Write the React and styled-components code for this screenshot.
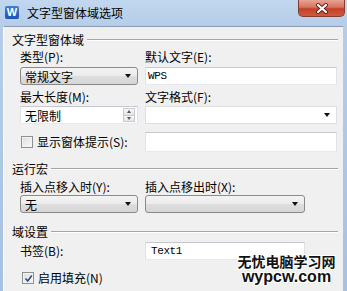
import React from "react";
import styled, { createGlobalStyle } from "styled-components";

const Global = createGlobalStyle`
  html, body { margin: 0; padding: 0; background: #b9d1ea; }
  body { font-family: "Noto Sans CJK SC", "Noto Sans", sans-serif; font-size: 12px; color: #000; }
`;

const Window = styled.div`
  position: relative;
  width: 347px;
  height: 291px;
  overflow: hidden;
  display: flex;
  flex-direction: column;
  background: linear-gradient(180deg, #c2d7ef 0px, #b5cde9 26px, #a7c1e1 291px);
`;

const TitleBar = styled.div`
  height: 26px;
  flex: none;
  display: flex;
  align-items: flex-start;
  padding-left: 5px;
`;

const AppIcon = styled.div`
  margin-top: 6px;
  width: 14px;
  height: 13px;
  background: linear-gradient(180deg, #3c7fd6, #1b55b0);
  border-radius: 2px;
  color: #fff;
  font-family: "Liberation Sans", sans-serif;
  font-weight: bold;
  font-size: 11px;
  line-height: 13px;
  text-align: center;
`;

const Title = styled.div`
  margin-left: 8px;
  margin-top: 5px;
  font-size: 12px;
  line-height: 16px;
  color: #000;
`;

const CloseBtn = styled.div`
  margin-left: auto;
  margin-right: 2px;
  width: 47px;
  height: 17px;
  box-sizing: border-box;
  border: 1px solid #8a3b30;
  border-top: none;
  border-radius: 0 0 5px 5px;
  background: linear-gradient(180deg, #e9a395 0%, #d7735f 45%, #c3402a 55%, #d05a3c 100%);
  display: flex;
  align-items: center;
  justify-content: center;
`;

const Body = styled.div`
  flex: 1;
  margin: 0 4px 0 3px;
  background: #f0f0f0;
  border-top: 1px solid #8b9bb0;
  border-left: 1px solid #f8fbfe;
  padding: 6px 5px 0 8px;
`;

const Header = styled.div`
  display: flex;
  align-items: center;
  height: 14px;
  line-height: 14px;
  margin-top: ${(p) => p.$mt || 0}px;
  white-space: nowrap;
  &::after {
    content: "";
    flex: 1;
    height: 1px;
    background: #a5a5a5;
    border-bottom: 1px solid #fff;
    margin-left: 3px;
  }
`;

const Row = styled.div`
  display: grid;
  grid-template-columns: 118px ${(p) => p.$right || 192}px;
  column-gap: 7px;
  align-items: center;
  height: ${(p) => p.$h || 14}px;
  margin-top: ${(p) => p.$mt || 0}px;
  padding-left: 8px;
`;

const Label = styled.div`
  line-height: 14px;
  white-space: nowrap;
`;

const Input = styled.div`
  box-sizing: border-box;
  height: ${(p) => p.$h || 18}px;
  background: #fff;
  border: 1px solid;
  border-color: #c5c9cf #dfe3e8 #e6eaee #dfe3e8;
  padding-left: ${(p) => p.$pl || 4}px;
  display: flex;
  align-items: center;
  position: relative;
`;

const Mono = styled.span`
  font-family: "Liberation Mono", monospace;
  font-size: 11px;
  letter-spacing: -0.4px;
`;

const Select = styled.div`
  box-sizing: border-box;
  height: 18px;
  border: 1px solid ${(p) => (p.$flat ? "#dcdfe4" : "#8a8a8a")};
  border-radius: ${(p) => (p.$flat ? 0 : 3)}px;
  background: ${(p) =>
    p.$flat ? "#fff" : "linear-gradient(180deg, #f4f4f4 0%, #ebebeb 50%, #dedede 51%, #d6d6d6 100%)"};
  display: flex;
  align-items: center;
  padding: 0 6px 0 4px;
`;

const SelectText = styled.span`
  flex: 1;
`;

const Arrow = styled.span`
  width: 0;
  height: 0;
  border-left: 3.5px solid transparent;
  border-right: 3.5px solid transparent;
  border-top: 4px solid #111;
`;

const Spin = styled.div`
  position: absolute;
  right: 2px;
  top: 1px;
  width: 12px;
  height: 14px;
  display: flex;
  flex-direction: column;
`;

const SpinBtn = styled.div`
  flex: 1;
  box-sizing: border-box;
  border: 1px solid #c8ccd2;
  background: linear-gradient(180deg, #f8f8f8, #e4e4e4);
  display: flex;
  align-items: center;
  justify-content: center;
  margin-top: ${(p) => (p.$down ? -1 : 0)}px;
  &::after {
    content: "";
    border-left: 2.5px solid transparent;
    border-right: 2.5px solid transparent;
    ${(p) => (p.$down ? "border-top: 3px solid #556;" : "border-bottom: 3px solid #556;")}
  }
`;

const Check = styled.label`
  display: flex;
  align-items: center;
  gap: 4px;
  white-space: nowrap;
  line-height: 14px;
`;

const Box = styled.span`
  box-sizing: border-box;
  width: 12px;
  height: 12px;
  border: 1px solid #8e8f8f;
  background: linear-gradient(135deg, #dcdcdc, #fbfbfb);
  box-shadow: inset 0 0 0 1px #f4f4f4;
  display: flex;
  align-items: center;
  justify-content: center;
  margin-left: 1px;
`;

const SingleRow = styled.div`
  padding-left: 9px;
  margin-top: ${(p) => p.$mt || 0}px;
`;

const Watermark = styled.div`
  position: absolute;
  left: 236px;
  top: 253px;
  width: 101px;
  text-align: center;
  font-weight: bold;
  color: #111;
  text-shadow: 1px 0 #fff, -1px 0 #fff, 0 1px #fff, 0 -1px #fff, 1px 1px #fff, -1px -1px #fff, 1px -1px #fff, -1px 1px #fff;
`;

const WmCn = styled.div`
  font-size: 14px;
  line-height: 16px;
`;

const WmEn = styled.div`
  font-family: "Liberation Sans", sans-serif;
  font-size: 16px;
  line-height: 16px;
`;

function CheckMark() {
  return (
    <svg width="9" height="9" viewBox="0 0 9 9">
      <path d="M1.5 4.5 L3.7 7 L7.8 1.5" fill="none" stroke="#2a4a8a" strokeWidth="1.6" />
    </svg>
  );
}

export default function App() {
  return (
    <Window>
      <Global />
      <TitleBar>
        <AppIcon>W</AppIcon>
        <Title>文字型窗体域选项</Title>
        <CloseBtn>
          <svg width="14" height="11" viewBox="0 0 14 11">
            <path d="M3 2 L11 9 M11 2 L3 9" stroke="#5a2018" strokeWidth="4" strokeLinecap="round" />
            <path d="M3 2 L11 9 M11 2 L3 9" stroke="#fff" strokeWidth="2.2" strokeLinecap="round" />
          </svg>
        </CloseBtn>
      </TitleBar>
      <Body>
        <Header>文字型窗体域</Header>
        <Row $mt={3}>
          <Label>类型(P):</Label>
          <Label>默认文字(E):</Label>
        </Row>
        <Row $h={18} $mt={3}>
          <Select>
            <SelectText>常规文字</SelectText>
            <Arrow />
          </Select>
          <Input $pl={2}>
            <Mono>WPS</Mono>
          </Input>
        </Row>
        <Row $mt={5}>
          <Label>最大长度(M):</Label>
          <Label>文字格式(F):</Label>
        </Row>
        <Row $h={18} $mt={2}>
          <Input>
            无限制
            <Spin>
              <SpinBtn />
              <SpinBtn $down />
            </Spin>
          </Input>
          <Select $flat>
            <SelectText />
            <Arrow />
          </Select>
        </Row>
        <Row $h={20} $mt={8}>
          <Check>
            <Box />
            显示窗体提示(S):
          </Check>
          <Input $h={20} />
        </Row>

        <Header $mt={10}>运行宏</Header>
        <Row $mt={4}>
          <Label>插入点移入时(Y):</Label>
          <Label>插入点移出时(X):</Label>
        </Row>
        <Row $h={18} $mt={1} $right={160}>
          <Select>
            <SelectText>无</SelectText>
            <Arrow />
          </Select>
          <Select>
            <SelectText />
            <Arrow />
          </Select>
        </Row>

        <Header $mt={12}>域设置</Header>
        <Row $h={18} $mt={3} $right={160}>
          <Label>书签(B):</Label>
          <Input $pl={5}>
            <Mono>Text1</Mono>
          </Input>
        </Row>
        <SingleRow $mt={11}>
          <Check>
            <Box>
              <CheckMark />
            </Box>
            启用填充(N)
          </Check>
        </SingleRow>
        <SingleRow $mt={5}>
          <Check>
            <Box />
            退出时计算(C)
          </Check>
        </SingleRow>
      </Body>
      <Watermark>
        <WmCn>无忧电脑学习网</WmCn>
        <WmEn>wypcw.com</WmEn>
      </Watermark>
    </Window>
  );
}
